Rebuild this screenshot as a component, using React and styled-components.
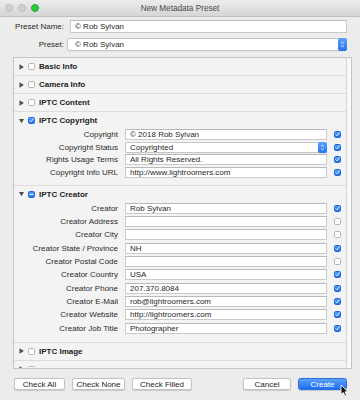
import React from "react";
import styled, { createGlobalStyle } from "styled-components";

const Global = createGlobalStyle`
  html, body { margin: 0; padding: 0; background: #ececec; }
  body {
    font-family: "Liberation Sans", Arial, Helvetica, sans-serif;
    font-size: 8px;
    color: #2b2b2b;
  }
`;

const Window = styled.div`
  position: relative;
  width: 360px;
  height: 400px;
  background: #ececec;
  overflow: hidden;
  display: flex;
  flex-direction: column;
`;

const TitleBar = styled.div`
  height: 16px;
  flex-shrink: 0;
  display: grid;
  grid-template-columns: 1fr auto 1fr;
  align-items: center;
  background: linear-gradient(#ececec, #d5d5d5);
  border-bottom: 1px solid #bfbfbf;
`;

const Lights = styled.div`
  display: flex;
  gap: 5px;
  padding-left: 5px;
`;

const Light = styled.span`
  width: 8px;
  height: 8px;
  border-radius: 50%;
  box-sizing: border-box;
  background: ${(p) => (p.$on ? "#2cc841" : "#d0d0d0")};
  border: 0.5px solid ${(p) => (p.$on ? "#1fa630" : "#bdbdbd")};
`;

const Title = styled.div`
  font-size: 8.2px;
  color: #4a4a4a;
`;

const TopForm = styled.div`
  display: grid;
  grid-template-columns: 64px 1fr;
  column-gap: 6px;
  row-gap: 5px;
  padding: 3px 13px 0 0;
  align-items: center;
`;

const TopLabel = styled.div`
  text-align: right;
  color: #2a2a2a;
`;

const TextBox = styled.div`
  height: ${(p) => p.$h || 13}px;
  box-sizing: border-box;
  background: #fff;
  border: 1px solid #cacaca;
  border-top-color: #b9b9b9;
  padding: 0 4px;
  display: flex;
  align-items: center;
  white-space: nowrap;
  overflow: hidden;
  color: #1f1f1f;
`;

const SelectBox = styled.div`
  height: ${(p) => p.$h || 13}px;
  box-sizing: border-box;
  background: #fff;
  border: 1px solid #c6c6c6;
  border-radius: 2px;
  margin-left: ${(p) => p.$shift || 0}px;
  padding-left: ${(p) => p.$pad || 4}px;
  display: flex;
  align-items: center;
  justify-content: space-between;
  color: #1f1f1f;
  box-shadow: 0 0.5px 0.5px rgba(0, 0, 0, 0.08);
`;

const Stepper = styled.span`
  width: 9px;
  align-self: stretch;
  margin: -1px -1px -1px 0;
  border-radius: 2px;
  background: linear-gradient(#5da2f9, #2474ef);
  display: flex;
  align-items: center;
  justify-content: center;
`;

const Panel = styled.div`
  margin: 6px 8px 0 13px;
  height: 312px;
  box-sizing: border-box;
  border: 1px solid #c5c5c5;
  background: #f4f3f3;
  display: flex;
  overflow: hidden;
  flex-shrink: 0;
`;

const Sections = styled.div`
  flex: 1;
  min-width: 0;
`;

const Track = styled.div`
  width: 4px;
  border-left: 1px solid #d6d6d6;
  background: #f9f9f9;
`;

const Section = styled.div`
  border-bottom: 1px solid #dcdcdc;
`;

const Header = styled.div`
  height: 17px;
  display: flex;
  align-items: center;
  padding-left: 5px;
  gap: 4px;
  font-weight: bold;
  color: #222;
`;

const Body = styled.div`
  margin-top: -1px;
  padding-bottom: ${(p) => p.$pb}px;
`;

const Row = styled.div`
  height: ${(p) => p.$h}px;
  display: grid;
  grid-template-columns: 104px 202px 7px;
  column-gap: 7px;
  align-items: center;
`;

const Label = styled.div`
  text-align: right;
  white-space: nowrap;
  color: #2a2a2a;
`;

const Box = styled.span`
  width: 7px;
  height: 7px;
  box-sizing: border-box;
  border-radius: 1.5px;
  flex-shrink: 0;
  display: flex;
  align-items: center;
  justify-content: center;
  background: ${(p) => (p.$on ? "linear-gradient(#4f9cf9, #1f71ef)" : "#fff")};
  border: 0.5px solid ${(p) => (p.$on ? "#2168d9" : "#b4b4b4")};
`;

const ButtonBar = styled.div`
  display: flex;
  align-items: center;
  gap: 7px;
  margin-top: 9px;
  padding: 0 13px 0 14px;
`;

const Spacer = styled.div`
  flex: 1;
`;

const Button = styled.div`
  width: ${(p) => p.$w}px;
  height: 12px;
  box-sizing: border-box;
  border-radius: 2.5px;
  display: flex;
  align-items: center;
  justify-content: center;
  font-size: 8px;
  color: ${(p) => (p.$primary ? "#fff" : "#222")};
  background: ${(p) => (p.$primary ? "linear-gradient(#5aa2fa, #1e6ff0)" : "#fff")};
  border: 0.5px solid ${(p) => (p.$primary ? "#2a6ee0" : "#c2c2c2")};
  box-shadow: 0 0.5px 1px rgba(0, 0, 0, 0.15);
`;

const Cursor = styled.svg`
  position: absolute;
  left: 340px;
  top: 384px;
`;

const Check = ({ on, mixed }) => (
  <Box $on={on || mixed}>
    {on && (
      <svg width="5" height="5" viewBox="0 0 5 5">
        <path d="M0.8 2.6 L2 3.8 L4.2 1" fill="none" stroke="#fff" strokeWidth="0.9" strokeLinecap="round" />
      </svg>
    )}
    {mixed && (
      <svg width="5" height="5" viewBox="0 0 5 5">
        <path d="M1 2.5 H4" stroke="#fff" strokeWidth="1" strokeLinecap="round" />
      </svg>
    )}
  </Box>
);

const Arrows = () => (
  <svg width="5" height="7" viewBox="0 0 5 7">
    <path d="M1 2.6 L2.5 1.2 L4 2.6 M1 4.4 L2.5 5.8 L4 4.4" fill="none" stroke="#fff" strokeWidth="0.8" />
  </svg>
);

const Disclosure = ({ open }) => (
  <svg width="5" height="6" viewBox="0 0 5 6">
    {open ? (
      <polygon points="0,1 5,1 2.5,5.3" fill="#4b4b4b" />
    ) : (
      <polygon points="0.5,0.3 4.8,3 0.5,5.7" fill="#4b4b4b" />
    )}
  </svg>
);

const Field = ({ label, value, on, select, h }) => (
  <Row $h={h}>
    <Label>{label}</Label>
    {select ? (
      <SelectBox $h={11} $pad={4}>
        {value}
        <Stepper>
          <Arrows />
        </Stepper>
      </SelectBox>
    ) : (
      <TextBox $h={11}>{value}</TextBox>
    )}
    <Check on={on} />
  </Row>
);

const copyright = [
  { label: "Copyright", value: "© 2018 Rob Sylvan", on: true },
  { label: "Copyright Status", value: "Copyrighted", on: true, select: true },
  { label: "Rights Usage Terms", value: "All Rights Reserved.", on: true },
  { label: "Copyright Info URL", value: "http://www.lightroomers.com", on: true },
];

const creator = [
  { label: "Creator", value: "Rob Sylvan", on: true },
  { label: "Creator Address", value: "", on: false },
  { label: "Creator City", value: "", on: false },
  { label: "Creator State / Province", value: "NH", on: true },
  { label: "Creator Postal Code", value: "", on: false },
  { label: "Creator Country", value: "USA", on: true },
  { label: "Creator Phone", value: "207.370.8084", on: true },
  { label: "Creator E-Mail", value: "rob@lightroomers.com", on: true },
  { label: "Creator Website", value: "http://lightroomers.com", on: true },
  { label: "Creator Job Title", value: "Photographer", on: true },
];

const Collapsed = ({ title }) => (
  <Section>
    <Header>
      <Disclosure />
      <Check />
      {title}
    </Header>
  </Section>
);

export default function App() {
  return (
    <Window>
      <Global />
      <TitleBar>
        <Lights>
          <Light />
          <Light />
          <Light $on />
        </Lights>
        <Title>New Metadata Preset</Title>
        <div />
      </TitleBar>

      <TopForm>
        <TopLabel>Preset Name:</TopLabel>
        <TextBox>© Rob Sylvan</TextBox>
        <TopLabel>Preset:</TopLabel>
        <SelectBox $shift={-3} $pad={7}>
          © Rob Sylvan
          <Stepper>
            <Arrows />
          </Stepper>
        </SelectBox>
      </TopForm>

      <Panel>
        <Sections>
          <Collapsed title="Basic Info" />
          <Collapsed title="Camera Info" />
          <Collapsed title="IPTC Content" />
          <Section>
            <Header>
              <Disclosure open />
              <Check on />
              IPTC Copyright
            </Header>
            <Body $pb={6}>
              {copyright.map((f) => (
                <Field key={f.label} {...f} h={12.7} />
              ))}
            </Body>
          </Section>
          <Section>
            <Header>
              <Disclosure open />
              <Check mixed />
              IPTC Creator
            </Header>
            <Body $pb={7}>
              {creator.map((f) => (
                <Field key={f.label} {...f} h={13.3} />
              ))}
            </Body>
          </Section>
          <Collapsed title="IPTC Image" />
          {/* next section is scrolled out of view; only its top edge shows */}
          <Collapsed />
        </Sections>
        <Track />
      </Panel>

      <ButtonBar>
        <Button $w={51}>Check All</Button>
        <Button $w={53}>Check None</Button>
        <Button $w={60}>Check Filled</Button>
        <Spacer />
        <Button $w={48}>Cancel</Button>
        <Button $w={49} $primary>
          Create
        </Button>
      </ButtonBar>

      <Cursor width="9" height="13" viewBox="0 0 9 13">
        <path d="M1 1 L1 10.5 L3.3 8.4 L5 12 L6.6 11.3 L4.9 7.8 L8 7.8 Z" fill="#000" stroke="#fff" strokeWidth="0.9" strokeLinejoin="round" />
      </Cursor>
    </Window>
  );
}
